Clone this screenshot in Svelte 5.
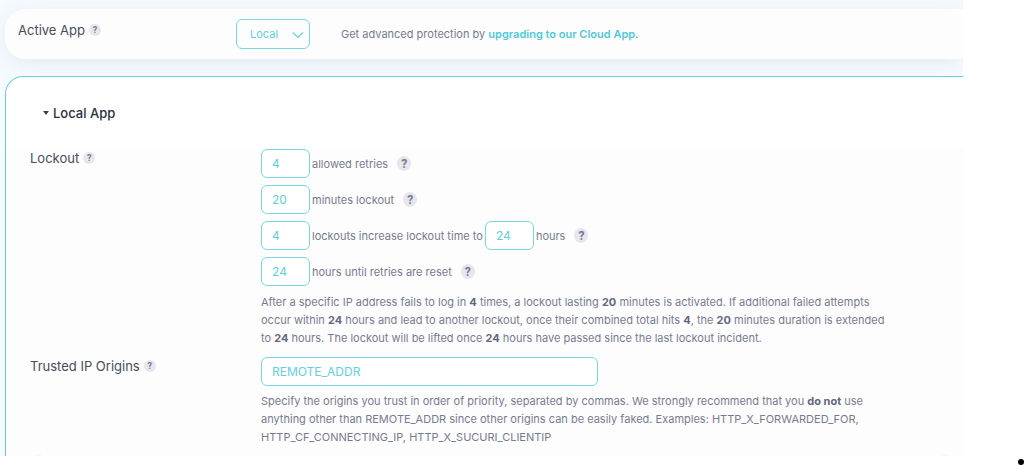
<script>
  let app = $state('local');
  let retries = $state('4');
  let minutes = $state('20');
  let lockouts = $state('4');
  let increase = $state('24');
  let reset = $state('24');
  let origins = $state('REMOTE_ADDR');
</script>

{#snippet help(topic, large)}
  <button type="button" class="help" class:large aria-label={`Help: ${topic}`}>?</button>
{/snippet}

<main class="page">
  <div class="viewport">
    <section class="card active-app">
      <div class="label">
        <label for="app">Active App</label>
        {@render help('active app', false)}
      </div>
      <div class="field inline">
        <div class="select">
          <select id="app" bind:value={app}>
            <option value="local">Local</option>
            <option value="cloud">Cloud</option>
          </select>
          <svg viewBox="0 0 12 8" width="12" height="8" aria-hidden="true">
            <path d="M1 1.5 6 6.5 11 1.5" fill="none" stroke="#66d0de" stroke-width="1.1" />
          </svg>
        </div>
        <p class="text">Get advanced protection by <a href="#upgrade">upgrading to our Cloud App</a>.</p>
      </div>
    </section>

    <section class="card local-app">
      <h2><span class="caret"></span>Local App</h2>
      <div class="settings">
        <div class="row">
          <div class="label">
            <label for="retries">Lockout</label>
            {@render help('lockout', false)}
          </div>
          <div class="field">
            <div class="line">
              <input id="retries" bind:value={retries} />
              <label for="retries">allowed retries</label>
              {@render help('allowed retries', true)}
            </div>
            <div class="line">
              <input id="minutes" bind:value={minutes} />
              <label for="minutes">minutes lockout</label>
              {@render help('minutes lockout', true)}
            </div>
            <div class="line">
              <input id="lockouts" bind:value={lockouts} />
              <label for="lockouts">lockouts increase lockout time to</label>
              <input id="increase" bind:value={increase} />
              <label for="increase">hours</label>
              {@render help('lockout increase', true)}
            </div>
            <div class="line">
              <input id="reset" bind:value={reset} />
              <label for="reset">hours until retries are reset</label>
              {@render help('retries reset', true)}
            </div>
            <p class="text note">
              After a specific IP address fails to log in <b>4</b> times, a lockout lasting <b>20</b> minutes is activated. If additional failed attempts<br />
              occur within <b>24</b> hours and lead to another lockout, once their combined total hits <b>4</b>, the <b>20</b> minutes duration is extended<br />
              to <b>24</b> hours. The lockout will be lifted once <b>24</b> hours have passed since the last lockout incident.
            </p>
          </div>
        </div>
        <div class="row">
          <div class="label">
            <label for="origins">Trusted IP Origins</label>
            {@render help('trusted IP origins', false)}
          </div>
          <div class="field">
            <input id="origins" class="wide" bind:value={origins} />
            <p class="text note">
              Specify the origins you trust in order of priority, separated by commas. We strongly recommend that you <b>do not</b> use<br />
              anything other than REMOTE_ADDR since other origins can be easily faked. Examples: HTTP_X_FORWARDED_FOR,<br />
              HTTP_CF_CONNECTING_IP, HTTP_X_SUCURI_CLIENTIP
            </p>
          </div>
        </div>
        <div class="next"><span></span><span></span></div>
      </div>
    </section>
  </div>
  <span class="dot"></span>
</main>

<style>
  :global(body) {
    margin: 0;
    background: #fff;
  }
  * {
    box-sizing: border-box;
  }
  .page {
    position: relative;
    padding: 0 61px 9px 0;
    font-family: Inter, sans-serif;
    font-size: 11px;
    line-height: 18px;
    color: #777b90;
  }
  .viewport {
    padding: 9px 0 0 5px;
    overflow: hidden;
    background: #f6fbff;
  }
  .card {
    display: flex;
    border-radius: 20px 0 0 20px;
  }
  .active-app {
    padding: 10px 0 10px 13px;
    background: #fdfdfd;
    box-shadow: 0 4px 22px rgba(60, 90, 110, 0.1);
  }
  .local-app {
    position: relative;
    flex-direction: column;
    margin-top: 17px;
    border: 1px solid #66d0de;
    border-width: 1px 0 0 1px;
    border-radius: 18px 0 0 0;
    background: #fff;
    overflow: hidden;
  }
  h2 {
    display: flex;
    align-items: center;
    gap: 4px;
    margin: 0;
    padding: 26px 0 26px 37px;
    font-size: 13px;
    line-height: 20px;
    font-weight: 500;
    color: #2a2f3e;
  }
  .caret {
    border: 3px solid transparent;
    border-top: 4px solid #3c4049;
    border-bottom: 0;
  }
  .settings {
    background: #fdfdfd;
  }
  .row {
    display: flex;
    padding-left: 24px;
  }
  .label {
    display: flex;
    align-items: center;
    align-self: flex-start;
    flex: none;
    gap: 4px;
    width: 231px;
    height: 18px;
    font-size: 13px;
    color: #474c5b;
  }
  .active-app .label {
    width: 218px;
    margin-top: 2px;
  }
  .field {
    flex: 1;
    min-width: 0;
  }
  .inline {
    display: flex;
    align-items: center;
    gap: 31px;
  }
  .text {
    margin: 0;
    white-space: nowrap;
  }
  .note {
    padding-bottom: 10px;
  }
  .wide + .note {
    padding: 6px 0 8px;
  }
  b {
    font-weight: 700;
    color: #62677f;
  }
  a {
    color: #4fcad8;
    font-weight: 600;
    text-decoration: none;
  }
  .select {
    position: relative;
  }
  .select svg {
    position: absolute;
    right: 6px;
    top: 12px;
    pointer-events: none;
  }
  select,
  input {
    display: block;
    margin: 0;
    border: 1px solid #7ad8e2;
    border-radius: 6px;
    color: #62cfdd;
    font: inherit;
    font-size: 12px;
    outline: 0;
  }
  select {
    appearance: none;
    width: 74px;
    height: 30px;
    padding: 0 13px;
    background: #fdfdfd;
    font-size: 11px;
  }
  input {
    width: 49px;
    height: 29px;
    padding: 0 10px;
    background: #fff;
  }
  .wide {
    width: 337px;
  }
  .line {
    display: flex;
    align-items: center;
    gap: 2px;
    margin-bottom: 7px;
  }
  .help {
    display: flex;
    align-items: center;
    justify-content: center;
    flex: none;
    width: 12px;
    height: 12px;
    padding: 0;
    border: 0;
    border-radius: 50%;
    background: #e6e7ec;
    color: #747991;
    font: 700 9px Roboto, sans-serif;
  }
  .large {
    width: 14px;
    height: 15px;
    margin-left: 7px;
    font-size: 12px;
  }
  .next {
    display: flex;
    justify-content: space-between;
    padding: 0 14px 0 28px;
  }
  .next span {
    width: 8px;
    height: 2px;
    border-radius: 8px 8px 0 0;
    background: #f2fafe;
  }
  .dot {
    position: absolute;
    right: 0;
    bottom: 0;
    width: 6px;
    height: 6px;
    border-radius: 50%;
    background: #000;
  }
</style>
